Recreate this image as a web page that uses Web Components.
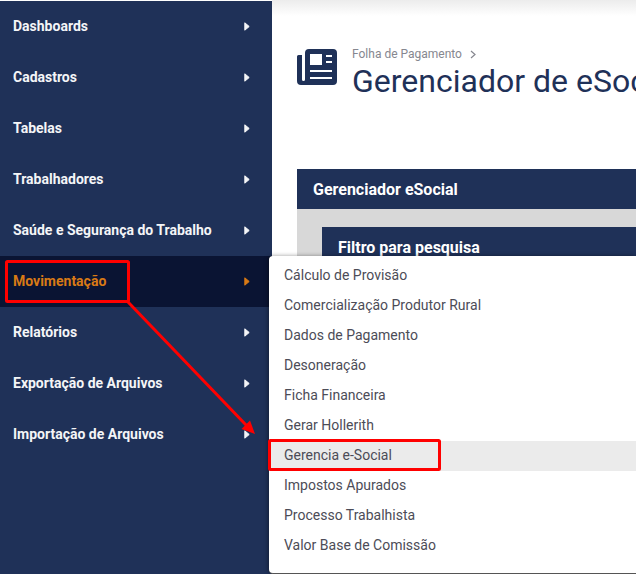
<!DOCTYPE html>
<html lang="pt-BR">
<head>
<meta charset="utf-8">
<title>Gerenciador de eSocial</title>
<style>
  html, body { margin: 0; height: 100%; overflow: hidden; background: #fff; font-family: Roboto, "Liberation Sans", sans-serif; }
</style>
</head>
<body>
<app-shell>
  <side-nav slot="nav">
    <nav-item>Dashboards</nav-item>
    <nav-item>Cadastros</nav-item>
    <nav-item>Tabelas</nav-item>
    <nav-item>Trabalhadores</nav-item>
    <nav-item>Saúde e Segurança do Trabalho</nav-item>
    <nav-item active>Movimentação</nav-item>
    <nav-item>Relatórios</nav-item>
    <nav-item>Exportação de Arquivos</nav-item>
    <nav-item>Importação de Arquivos</nav-item>
  </side-nav>
  <page-head slot="main" crumb="Folha de Pagamento" heading="Gerenciador de eSocial"></page-head>
  <panel-box slot="main" heading="Gerenciador eSocial">
    <panel-box nested heading="Filtro para pesquisa"></panel-box>
  </panel-box>
  <flyout-menu slot="over">
    <menu-link>Cálculo de Provisão</menu-link>
    <menu-link>Comercialização Produtor Rural</menu-link>
    <menu-link>Dados de Pagamento</menu-link>
    <menu-link>Desoneração</menu-link>
    <menu-link>Ficha Financeira</menu-link>
    <menu-link>Gerar Hollerith</menu-link>
    <menu-link active>Gerencia e-Social</menu-link>
    <menu-link>Impostos Apurados</menu-link>
    <menu-link>Processo Trabalhista</menu-link>
    <menu-link>Valor Base de Comissão</menu-link>
  </flyout-menu>
  <red-marks slot="over"></red-marks>
</app-shell>

<script>
// page frame: sidebar on the left, content on the right, overlays on top
class AppShell extends HTMLElement {
  constructor() {
    super();
    this.attachShadow({mode: "open"}).innerHTML = `
      <style>
        :host { display: flex; position: relative; width: 636px; height: 574px; overflow: hidden; }
        .nav { display: block; flex: 0 0 272px; }
        .main { flex: 1; min-width: 0; padding: 0 0 0 25px; background: linear-gradient(#ececec, #fff 16px) no-repeat; background-size: 100% 16px; }
      </style>
      <div class="nav"><slot name="nav"></slot></div>
      <div class="main"><slot name="main"></slot></div>
      <slot name="over"></slot>`;
  }
}

class SideNav extends HTMLElement {
  constructor() {
    super();
    this.attachShadow({mode: "open"}).innerHTML = `
      <style>
        :host { display: flex; flex-direction: column; height: 573px; padding-top: 1px; background: #1f3158; background-clip: content-box; }
      </style>
      <slot></slot>`;
  }
}

class NavItem extends HTMLElement {
  constructor() {
    super();
    this.attachShadow({mode: "open"}).innerHTML = `
      <style>
        :host { display: flex; align-items: center; justify-content: space-between; height: 49px; padding: 0 22px 2px 13px; color: #f4f5f7; font: 700 14px/20px Roboto, "Liberation Sans", sans-serif; }
        :host([active]) { background: #0a1433; color: #d97a15; }
        svg { display: block; width: 6px; height: 9px; margin-top: 2px; fill: currentColor; stroke: currentColor; stroke-width: 1; stroke-linejoin: round; }
      </style>
      <slot></slot>
      <svg viewBox="0 0 6 9"><path d="M.8.8 5.200 4.500.8 8.200z"/></svg>`;
  }
}

class PageHead extends HTMLElement {
  constructor() {
    super();
    this.attachShadow({mode: "open"}).innerHTML = `
      <style>
        :host { display: flex; gap: 15px; padding: 45px 0 0; height: 124px; box-sizing: border-box; white-space: nowrap; }
        svg { flex: none; width: 40px; height: 36px; margin-top: 4px; fill: #1f3158; }
        .crumb { display: flex; gap: 8px; align-items: center; height: 18px; color: #86878f; font-size: 12px; }
        h1 { margin: 0; color: #1f3158; font: 400 32px/36px Roboto, "Liberation Sans", sans-serif; }
      </style>
      <svg viewBox="0 0 40 36">
        <path d="M1.500 6H5v24.500a1 1 0 0 0 3 0V4a4 4 0 0 1 4-4h24a4 4 0 0 1 4 4v28a4 4 0 0 1-4 4H4a4 4 0 0 1-4-4V7.500A1.500 1.500 0 0 1 1.500 6zM13 5v11h12V5zM29 6v2h6V6zM29 12v2h6v-2zM13 21v2h22v-2zM13 28v2h22v-2z" fill-rule="evenodd"/>
      </svg>
      <div>
        <div class="crumb"><span id="crumb"></span><svg style="width:6px;height:9px;margin:0;fill:none;stroke:#86878f;stroke-width:1.200" viewBox="0 0 6 9"><path d="M1 1l4 3.500-4 3.500"/></svg></div>
        <h1 id="title"></h1>
      </div>`;
  }
  connectedCallback() {
    this.shadowRoot.getElementById("crumb").textContent = this.getAttribute("crumb");
    this.shadowRoot.getElementById("title").textContent = this.getAttribute("heading");
  }
}

class PanelBox extends HTMLElement {
  constructor() {
    super();
    this.attachShadow({mode: "open"}).innerHTML = `
      <style>
        :host { display: block; margin-top: 45px; background: #d8d8d8; height: 405px; }
        :host([nested]) { margin: 0 0 0 25px; background: #fff; height: 300px; }
        .bar { height: 40px; padding-left: 16px; background: #1f3158; color: #fff; font: 700 16px/41px Roboto, "Liberation Sans", sans-serif; white-space: nowrap; }
        :host([nested]) .bar { line-height: 42px; }
        .body { padding-top: 18px; }
        :host([nested]) .body { padding-top: 0; }
      </style>
      <div class="bar" id="bar"></div>
      <div class="body"><slot></slot></div>`;
  }
  connectedCallback() {
    this.shadowRoot.getElementById("bar").textContent = this.getAttribute("heading");
  }
}

class FlyoutMenu extends HTMLElement {
  constructor() {
    super();
    this.attachShadow({mode: "open"}).innerHTML = `
      <style>
        :host { display: block; position: absolute; left: 269px; top: 256px; width: 367px; height: 317px; box-sizing: border-box; padding: 5px 0; background: #fff; border-radius: 4px 0 0 4px; box-shadow: 0 1px 0 #555, -1px 0 4px rgba(0,0,0,.4); }
      </style>
      <slot></slot>`;
  }
}

class MenuLink extends HTMLElement {
  constructor() {
    super();
    this.attachShadow({mode: "open"}).innerHTML = `
      <style>
        :host { display: block; height: 30px; padding-left: 15px; color: #4c4c57; font: 400 14px/29px Roboto, "Liberation Sans", sans-serif; white-space: nowrap; }
        :host([active]) { background: #ebebeb; }
      </style>
      <slot></slot>`;
  }
}

// hand drawn notes on the screenshot: the two boxes and the arrow
class RedMarks extends HTMLElement {
  constructor() {
    super();
    this.attachShadow({mode: "open"}).innerHTML = `
      <style>
        :host { display: block; position: absolute; inset: 0; pointer-events: none; }
        svg { display: block; width: 636px; height: 574px; }
      </style>
      <svg viewBox="0 0 636 574" fill="none" stroke="#f00" stroke-width="3">
        <rect x="6.500" y="261.500" width="122" height="40" rx="1"/>
        <rect x="269.500" y="440.500" width="170" height="29" rx="1"/>
        <path d="M128 302 247 426"/>
        <path d="M255 434 250 420.500 241.500 429z" fill="#f00" stroke="none"/>
      </svg>`;
  }
}

customElements.define("app-shell", AppShell);
customElements.define("side-nav", SideNav);
customElements.define("nav-item", NavItem);
customElements.define("page-head", PageHead);
customElements.define("panel-box", PanelBox);
customElements.define("flyout-menu", FlyoutMenu);
customElements.define("menu-link", MenuLink);
customElements.define("red-marks", RedMarks);
</script>
</body>
</html>
